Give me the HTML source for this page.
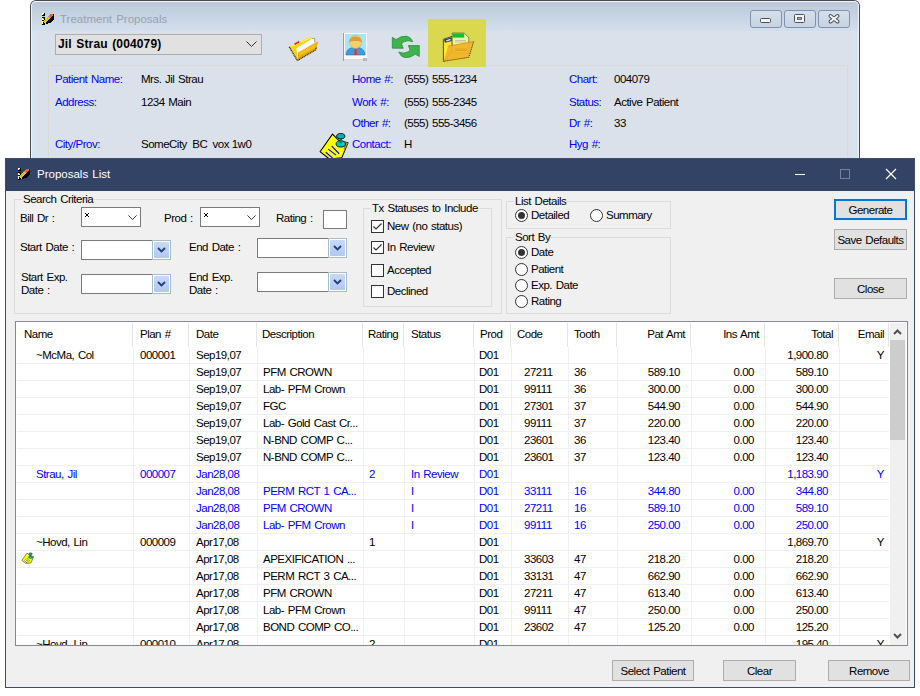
<!DOCTYPE html><html><head><meta charset="utf-8"><style>
*{margin:0;padding:0;box-sizing:border-box}
html,body{width:920px;height:696px;overflow:hidden;background:#fff;font-family:"Liberation Sans",sans-serif;font-size:11.5px;color:#000;letter-spacing:-0.5px;word-spacing:1px}
.a{position:absolute}
.t{position:absolute;line-height:17px;white-space:pre}
</style></head><body>
<div class="a" style="left:30px;top:0;width:830px;height:170px;border:1px solid #4a4a4a;border-bottom:none;border-radius:6px 6px 0 0;background:linear-gradient(#bac8d9,#d3dfec 30px);"></div>
<div class="a" style="left:31px;top:1px;width:828px;height:169px;border:1px solid #eef4ff;border-bottom:none;border-radius:5px 5px 0 0;"></div>
<div class="a" style="left:32px;top:31px;width:6px;height:130px;background:#d6e4f0"></div>
<div class="a" style="left:852px;top:31px;width:6px;height:130px;background:#d6e4f0"></div>
<div class="a" style="left:38px;top:31px;width:814px;height:130px;background:#dbe1eb"></div>
<div class="t" style="left:60px;top:11px;font-size:11.5px;letter-spacing:0;color:#9aa0ad">Treatment Proposals</div>
<div class="a" style="left:750px;top:10px;width:32px;height:18px;border:1px solid #8191b3;border-radius:3px;background:linear-gradient(#d6e0ec,#c6d3e2)"></div>
<div class="a" style="left:784px;top:10px;width:32px;height:18px;border:1px solid #8191b3;border-radius:3px;background:linear-gradient(#d6e0ec,#c6d3e2)"></div>
<div class="a" style="left:818px;top:10px;width:32px;height:18px;border:1px solid #8191b3;border-radius:3px;background:linear-gradient(#d6e0ec,#c6d3e2)"></div>
<div class="a" style="left:55px;top:34px;width:207px;height:21px;border:1px solid #adadad;background:#e1e1e1"></div>
<div class="t" style="left:58px;top:36px;font-size:12px;font-weight:bold;letter-spacing:0.15px">Jil Strau (004079)</div>
<div class="a" style="left:48px;top:65px;width:800px;height:100px;border:1px solid #d9d9d9;border-bottom:none;background:#dbe1eb"></div>
<div class="t" style="left:55px;top:71px;color:#0000ff;">Patient Name:</div>
<div class="t" style="left:141px;top:71px;">Mrs. Jil Strau</div>
<div class="t" style="left:55px;top:94px;color:#0000ff;">Address:</div>
<div class="t" style="left:141px;top:94px;">1234 Main</div>
<div class="t" style="left:55px;top:136px;color:#0000ff;">City/Prov:</div>
<div class="t" style="left:141px;top:136px;"><span style="word-spacing:0">SomeCity  BC  vox 1w0</span></div>
<div class="t" style="left:352px;top:71px;color:#0000ff;">Home #:</div>
<div class="t" style="left:404px;top:71px;">(555) 555-1234</div>
<div class="t" style="left:352px;top:94px;color:#0000ff;">Work #:</div>
<div class="t" style="left:404px;top:94px;">(555) 555-2345</div>
<div class="t" style="left:352px;top:115px;color:#0000ff;">Other #:</div>
<div class="t" style="left:404px;top:115px;">(555) 555-3456</div>
<div class="t" style="left:352px;top:136px;color:#0000ff;">Contact:</div>
<div class="t" style="left:404px;top:136px;">H</div>
<div class="t" style="left:569px;top:71px;color:#0000ff;">Chart:</div>
<div class="t" style="left:614px;top:71px;">004079</div>
<div class="t" style="left:569px;top:94px;color:#0000ff;">Status:</div>
<div class="t" style="left:614px;top:94px;">Active Patient</div>
<div class="t" style="left:569px;top:115px;color:#0000ff;">Dr #:</div>
<div class="t" style="left:614px;top:115px;">33</div>
<div class="t" style="left:569px;top:136px;color:#0000ff;">Hyg #:</div>
<div class="a" style="left:428px;top:19px;width:58px;height:48px;background:#d9d84f"></div>
<svg class="a" style="left:42px;top:13px" width="12" height="12" shape-rendering="crispEdges"><rect x="0" y="0" width="1" height="1" fill="#ffffff"/><rect x="1" y="0" width="1" height="1" fill="#ffffff"/><rect x="2" y="0" width="1" height="1" fill="#000000"/><rect x="0" y="1" width="1" height="1" fill="#ffffff"/><rect x="1" y="1" width="1" height="1" fill="#ff0000"/><rect x="2" y="1" width="1" height="1" fill="#000000"/><rect x="8" y="1" width="1" height="1" fill="#e86010"/><rect x="9" y="1" width="1" height="1" fill="#e86010"/><rect x="10" y="1" width="1" height="1" fill="#e86010"/><rect x="11" y="1" width="1" height="1" fill="#000000"/><rect x="0" y="2" width="1" height="1" fill="#000000"/><rect x="1" y="2" width="1" height="1" fill="#000000"/><rect x="2" y="2" width="1" height="1" fill="#000000"/><rect x="7" y="2" width="1" height="1" fill="#9a9aa8"/><rect x="8" y="2" width="1" height="1" fill="#e86010"/><rect x="9" y="2" width="1" height="1" fill="#e86010"/><rect x="10" y="2" width="1" height="1" fill="#e86010"/><rect x="11" y="2" width="1" height="1" fill="#000000"/><rect x="6" y="3" width="1" height="1" fill="#9a9aa8"/><rect x="7" y="3" width="1" height="1" fill="#9a9aa8"/><rect x="8" y="3" width="1" height="1" fill="#e86010"/><rect x="9" y="3" width="1" height="1" fill="#e86010"/><rect x="10" y="3" width="1" height="1" fill="#000000"/><rect x="11" y="3" width="1" height="1" fill="#000000"/><rect x="0" y="4" width="1" height="1" fill="#000000"/><rect x="1" y="4" width="1" height="1" fill="#000000"/><rect x="2" y="4" width="1" height="1" fill="#000000"/><rect x="5" y="4" width="1" height="1" fill="#f0c800"/><rect x="6" y="4" width="1" height="1" fill="#f0c800"/><rect x="7" y="4" width="1" height="1" fill="#9a9aa8"/><rect x="8" y="4" width="1" height="1" fill="#e86010"/><rect x="9" y="4" width="1" height="1" fill="#000000"/><rect x="10" y="4" width="1" height="1" fill="#000000"/><rect x="11" y="4" width="1" height="1" fill="#000000"/><rect x="0" y="5" width="1" height="1" fill="#ffffff"/><rect x="1" y="5" width="1" height="1" fill="#00e000"/><rect x="2" y="5" width="1" height="1" fill="#000000"/><rect x="4" y="5" width="1" height="1" fill="#f0c800"/><rect x="5" y="5" width="1" height="1" fill="#b8a850"/><rect x="6" y="5" width="1" height="1" fill="#f0c800"/><rect x="7" y="5" width="1" height="1" fill="#f0c800"/><rect x="8" y="5" width="1" height="1" fill="#000000"/><rect x="9" y="5" width="1" height="1" fill="#000000"/><rect x="10" y="5" width="1" height="1" fill="#000000"/><rect x="11" y="5" width="1" height="1" fill="#000000"/><rect x="0" y="6" width="1" height="1" fill="#ffffff"/><rect x="1" y="6" width="1" height="1" fill="#ffffff"/><rect x="2" y="6" width="1" height="1" fill="#000000"/><rect x="3" y="6" width="1" height="1" fill="#f0c800"/><rect x="4" y="6" width="1" height="1" fill="#f0c800"/><rect x="5" y="6" width="1" height="1" fill="#f0c800"/><rect x="6" y="6" width="1" height="1" fill="#b8a850"/><rect x="7" y="6" width="1" height="1" fill="#000000"/><rect x="8" y="6" width="1" height="1" fill="#000000"/><rect x="9" y="6" width="1" height="1" fill="#000000"/><rect x="10" y="6" width="1" height="1" fill="#000000"/><rect x="11" y="6" width="1" height="1" fill="#000000"/><rect x="0" y="7" width="1" height="1" fill="#000000"/><rect x="1" y="7" width="1" height="1" fill="#000000"/><rect x="2" y="7" width="1" height="1" fill="#f0c800"/><rect x="3" y="7" width="1" height="1" fill="#b8a850"/><rect x="4" y="7" width="1" height="1" fill="#f0c800"/><rect x="5" y="7" width="1" height="1" fill="#f0c800"/><rect x="6" y="7" width="1" height="1" fill="#000000"/><rect x="7" y="7" width="1" height="1" fill="#000000"/><rect x="8" y="7" width="1" height="1" fill="#000000"/><rect x="9" y="7" width="1" height="1" fill="#000000"/><rect x="10" y="7" width="1" height="1" fill="#000000"/><rect x="0" y="8" width="1" height="1" fill="#ffffff"/><rect x="1" y="8" width="1" height="1" fill="#f0c800"/><rect x="2" y="8" width="1" height="1" fill="#f0c800"/><rect x="3" y="8" width="1" height="1" fill="#f0c800"/><rect x="4" y="8" width="1" height="1" fill="#b8a850"/><rect x="5" y="8" width="1" height="1" fill="#000000"/><rect x="6" y="8" width="1" height="1" fill="#000000"/><rect x="7" y="8" width="1" height="1" fill="#000000"/><rect x="8" y="8" width="1" height="1" fill="#000000"/><rect x="9" y="8" width="1" height="1" fill="#000000"/><rect x="0" y="9" width="1" height="1" fill="#ffffff"/><rect x="1" y="9" width="1" height="1" fill="#000000"/><rect x="2" y="9" width="1" height="1" fill="#f0c800"/><rect x="3" y="9" width="1" height="1" fill="#f0c800"/><rect x="4" y="9" width="1" height="1" fill="#000000"/><rect x="5" y="9" width="1" height="1" fill="#000000"/><rect x="6" y="9" width="1" height="1" fill="#000000"/><rect x="7" y="9" width="1" height="1" fill="#000000"/><rect x="8" y="9" width="1" height="1" fill="#000000"/><rect x="0" y="10" width="1" height="1" fill="#ffffff"/><rect x="1" y="10" width="1" height="1" fill="#000000"/><rect x="2" y="10" width="1" height="1" fill="#000000"/><rect x="3" y="10" width="1" height="1" fill="#f0c800"/><rect x="4" y="10" width="1" height="1" fill="#000000"/><rect x="5" y="10" width="1" height="1" fill="#000000"/><rect x="0" y="11" width="1" height="1" fill="#000000"/><rect x="1" y="11" width="1" height="1" fill="#000000"/><rect x="2" y="11" width="1" height="1" fill="#000000"/></svg>
<svg class="a" style="left:750px;top:10px" width="100" height="18"><rect x="10.5" y="8.5" width="10" height="4" rx="1" fill="#f4f4f4" stroke="#4a4f5a"/><rect x="44.5" y="4.5" width="10" height="8" rx="1" fill="#f4f4f4" stroke="#4a4f5a"/><rect x="47.5" y="7.5" width="4" height="2" fill="#9fb0c8" stroke="#4a4f5a" stroke-width="0.8"/><path d="M80.5 6L87.5 11.5M87.5 6L80.5 11.5" stroke="#4a4f5a" stroke-width="4" stroke-linecap="round"/><path d="M80.5 6L87.5 11.5M87.5 6L80.5 11.5" stroke="#f4f4f4" stroke-width="2" stroke-linecap="round"/></svg>
<svg class="a" style="left:246px;top:41px" width="11" height="7"><path d="M0.5 0.5L5.5 5.5L10.5 0.5" fill="none" stroke="#333" stroke-width="1"/></svg>
<svg class="a" style="left:280px;top:30px" width="50" height="40" viewBox="280 30 50 40"><path d="M289.5,46.6 L309.3,37.3 L312.5,38.6 L296.6,48 L297.3,60.2 Z" fill="#f2d412"/><path d="M290.5,46 L309.3,37.6 L311,38.3 L292,47 Z" fill="#fff050"/><path d="M296.6,48.2 L312,39 L314.7,38.3 L314.7,42.5 L298,52.8 L297.5,58.5 Z" fill="#ffffff"/><path d="M312,38.6 L314.7,38.3 L314.7,42.5" fill="none" stroke="#a09a60" stroke-width="0.9"/><path d="M297.3,60.3 L298,52.8 L318.2,41.2 L315.6,49.8 Z" fill="#f0ac00"/><path d="M299,56 L300,52.5 L316,43.5 L314.5,48 Z" fill="#f5c020"/><path d="M289.2,46.8 L297.3,60.6 L315.6,49.8 L316.5,47" fill="none" stroke="#3a3010" stroke-width="1.3" stroke-dasharray="1.2 0.6"/><path d="M294,43.8 L298.8,41 L299.2,42.6 L295,45 Z" fill="#ff1010"/></svg>
<svg class="a" style="left:343px;top:33px" width="24" height="28"><rect x="0" y="0" width="24" height="28" fill="#f8f8f8"/><rect x="0" y="0" width="1" height="28" fill="#a596ad"/><rect x="2" y="1" width="21" height="21" fill="#a8e4fa"/><rect x="1" y="26" width="23" height="2" fill="#dcdcdc"/><rect x="20" y="25" width="4" height="3" fill="#b8b8b8"/><path d="M3,22 C3.5,16 7,14.5 12.5,14.5 C18,14.5 21.5,16 22,22 Z" fill="#3f9be0" stroke="#2a6fb8" stroke-width="0.6"/><path d="M11.6,15.5 L13.6,15.5 L14,22 L11.2,22 Z" fill="#e23a1e"/><ellipse cx="12.5" cy="8.8" rx="6.2" ry="6.6" fill="#f7d06c" stroke="#d8a640" stroke-width="0.5"/><path d="M6.3,9.5 C5.8,1.5 19.2,1.5 18.7,9.5 C17,7.6 8,7.6 6.3,9.5 Z" fill="#d3a04a"/></svg>
<svg class="a" style="left:388px;top:32px" width="36" height="30" viewBox="388 32 36 30"><path d="M392.3,37.3 L396.2,39.5 Q401.5,35.6 406.8,36.2 Q411,37 412.8,41.8 Q408,39.6 403.5,42 Q401.2,43.5 401.8,44.6 L403.3,48.3 L392.3,48.2 Z" fill="#3db54a" stroke="#1f8a34" stroke-width="0.7"/><path transform="rotate(180 405.8 46.9)" d="M392.3,37.3 L396.2,39.5 Q401.5,35.6 406.8,36.2 Q411,37 412.8,41.8 Q408,39.6 403.5,42 Q401.2,43.5 401.8,44.6 L403.3,48.3 L392.3,48.2 Z" fill="#3db54a" stroke="#1f8a34" stroke-width="0.7"/></svg>
<svg class="a" style="left:438px;top:28px" width="40" height="36" viewBox="438 28 40 36"><path d="M443.4,39.3 L452.2,36.4 L452.2,50 L444.5,61.3 L443.4,61.3 Z" fill="#f8e830" stroke="#3a2c10" stroke-width="0.8"/><path d="M444,39.5 L451.7,37.2 L451.7,41 L445,42.8 Z" fill="#283a88"/><path d="M446,40.2 L450.5,38.8 L450.5,40.3 L446.5,41.5 Z" fill="#e8e8c0"/><path d="M452.2,33 L464.2,33 L468.8,37.6 L468.8,53 L452.2,53 Z" fill="#f4f09c" stroke="#4a4a20" stroke-width="0.6"/><rect x="452.5" y="33.3" width="11.7" height="4.3" fill="#10c030"/><path d="M455,40.5 H466 M455,42 H466" stroke="#b8c8a0" stroke-width="0.9"/><path d="M448.3,46.1 L473.7,41.5 L468.8,57.4 L443.4,61.3 Z" fill="#f0b428" fill-opacity="0.93"/><path d="M455,49 H467 M455,50.5 H467" stroke="#e0a020" stroke-width="0.9"/><path d="M473.7,41.5 L468.8,57.4 L443.4,61.3" fill="none" stroke="#6a2010" stroke-width="0.9" stroke-dasharray="1.2 0.8"/><path d="M448.3,46.1 L473.7,41.5" fill="none" stroke="#c08010" stroke-width="0.6"/></svg>
<svg class="a" style="left:318px;top:132px" width="31" height="28" viewBox="318 132 30 27"><path d="M320,151 L332,134 L338,140 L347,142.5 L341,157 L329,158 Z" fill="#ffff00" stroke="#000" stroke-width="1"/><path d="M325.5,151.5 L332.5,157.5 M328,148.5 L335.5,154.3 M331.3,145.7 L338.5,153" stroke="#0000ff" stroke-width="1.1"/><path d="M343,141 L347,142.5 L343,151 Z" fill="#a09010"/><ellipse cx="340" cy="143.5" rx="4.5" ry="3" fill="#00c8c8" stroke="#000" stroke-width="0.8"/><rect x="339" y="137" width="2.2" height="6" fill="#008888"/><ellipse cx="340" cy="136" rx="4" ry="2.6" fill="#00b0b0" stroke="#000" stroke-width="0.8"/></svg>
<div class="a" style="left:5px;top:158px;width:910px;height:530px;border:1px solid #3c4b6e;background:#f0f0f0"></div>
<div class="a" style="left:6px;top:159px;width:908px;height:32px;background:#334365"></div>
<div class="t" style="left:37px;top:166px;font-size:11.5px;letter-spacing:0;color:#fff">Proposals List</div>
<svg class="a" style="left:18px;top:168px" width="12" height="12" shape-rendering="crispEdges"><rect x="0" y="0" width="1" height="1" fill="#ffffff"/><rect x="1" y="0" width="1" height="1" fill="#ffffff"/><rect x="2" y="0" width="1" height="1" fill="#000000"/><rect x="0" y="1" width="1" height="1" fill="#ffffff"/><rect x="1" y="1" width="1" height="1" fill="#ff0000"/><rect x="2" y="1" width="1" height="1" fill="#000000"/><rect x="8" y="1" width="1" height="1" fill="#e86010"/><rect x="9" y="1" width="1" height="1" fill="#e86010"/><rect x="10" y="1" width="1" height="1" fill="#e86010"/><rect x="11" y="1" width="1" height="1" fill="#000000"/><rect x="0" y="2" width="1" height="1" fill="#000000"/><rect x="1" y="2" width="1" height="1" fill="#000000"/><rect x="2" y="2" width="1" height="1" fill="#000000"/><rect x="7" y="2" width="1" height="1" fill="#9a9aa8"/><rect x="8" y="2" width="1" height="1" fill="#e86010"/><rect x="9" y="2" width="1" height="1" fill="#e86010"/><rect x="10" y="2" width="1" height="1" fill="#e86010"/><rect x="11" y="2" width="1" height="1" fill="#000000"/><rect x="6" y="3" width="1" height="1" fill="#9a9aa8"/><rect x="7" y="3" width="1" height="1" fill="#9a9aa8"/><rect x="8" y="3" width="1" height="1" fill="#e86010"/><rect x="9" y="3" width="1" height="1" fill="#e86010"/><rect x="10" y="3" width="1" height="1" fill="#000000"/><rect x="11" y="3" width="1" height="1" fill="#000000"/><rect x="0" y="4" width="1" height="1" fill="#000000"/><rect x="1" y="4" width="1" height="1" fill="#000000"/><rect x="2" y="4" width="1" height="1" fill="#000000"/><rect x="5" y="4" width="1" height="1" fill="#f0c800"/><rect x="6" y="4" width="1" height="1" fill="#f0c800"/><rect x="7" y="4" width="1" height="1" fill="#9a9aa8"/><rect x="8" y="4" width="1" height="1" fill="#e86010"/><rect x="9" y="4" width="1" height="1" fill="#000000"/><rect x="10" y="4" width="1" height="1" fill="#000000"/><rect x="11" y="4" width="1" height="1" fill="#000000"/><rect x="0" y="5" width="1" height="1" fill="#ffffff"/><rect x="1" y="5" width="1" height="1" fill="#00e000"/><rect x="2" y="5" width="1" height="1" fill="#000000"/><rect x="4" y="5" width="1" height="1" fill="#f0c800"/><rect x="5" y="5" width="1" height="1" fill="#b8a850"/><rect x="6" y="5" width="1" height="1" fill="#f0c800"/><rect x="7" y="5" width="1" height="1" fill="#f0c800"/><rect x="8" y="5" width="1" height="1" fill="#000000"/><rect x="9" y="5" width="1" height="1" fill="#000000"/><rect x="10" y="5" width="1" height="1" fill="#000000"/><rect x="11" y="5" width="1" height="1" fill="#000000"/><rect x="0" y="6" width="1" height="1" fill="#ffffff"/><rect x="1" y="6" width="1" height="1" fill="#ffffff"/><rect x="2" y="6" width="1" height="1" fill="#000000"/><rect x="3" y="6" width="1" height="1" fill="#f0c800"/><rect x="4" y="6" width="1" height="1" fill="#f0c800"/><rect x="5" y="6" width="1" height="1" fill="#f0c800"/><rect x="6" y="6" width="1" height="1" fill="#b8a850"/><rect x="7" y="6" width="1" height="1" fill="#000000"/><rect x="8" y="6" width="1" height="1" fill="#000000"/><rect x="9" y="6" width="1" height="1" fill="#000000"/><rect x="10" y="6" width="1" height="1" fill="#000000"/><rect x="11" y="6" width="1" height="1" fill="#000000"/><rect x="0" y="7" width="1" height="1" fill="#000000"/><rect x="1" y="7" width="1" height="1" fill="#000000"/><rect x="2" y="7" width="1" height="1" fill="#f0c800"/><rect x="3" y="7" width="1" height="1" fill="#b8a850"/><rect x="4" y="7" width="1" height="1" fill="#f0c800"/><rect x="5" y="7" width="1" height="1" fill="#f0c800"/><rect x="6" y="7" width="1" height="1" fill="#000000"/><rect x="7" y="7" width="1" height="1" fill="#000000"/><rect x="8" y="7" width="1" height="1" fill="#000000"/><rect x="9" y="7" width="1" height="1" fill="#000000"/><rect x="10" y="7" width="1" height="1" fill="#000000"/><rect x="0" y="8" width="1" height="1" fill="#ffffff"/><rect x="1" y="8" width="1" height="1" fill="#f0c800"/><rect x="2" y="8" width="1" height="1" fill="#f0c800"/><rect x="3" y="8" width="1" height="1" fill="#f0c800"/><rect x="4" y="8" width="1" height="1" fill="#b8a850"/><rect x="5" y="8" width="1" height="1" fill="#000000"/><rect x="6" y="8" width="1" height="1" fill="#000000"/><rect x="7" y="8" width="1" height="1" fill="#000000"/><rect x="8" y="8" width="1" height="1" fill="#000000"/><rect x="9" y="8" width="1" height="1" fill="#000000"/><rect x="0" y="9" width="1" height="1" fill="#ffffff"/><rect x="1" y="9" width="1" height="1" fill="#000000"/><rect x="2" y="9" width="1" height="1" fill="#f0c800"/><rect x="3" y="9" width="1" height="1" fill="#f0c800"/><rect x="4" y="9" width="1" height="1" fill="#000000"/><rect x="5" y="9" width="1" height="1" fill="#000000"/><rect x="6" y="9" width="1" height="1" fill="#000000"/><rect x="7" y="9" width="1" height="1" fill="#000000"/><rect x="8" y="9" width="1" height="1" fill="#000000"/><rect x="0" y="10" width="1" height="1" fill="#ffffff"/><rect x="1" y="10" width="1" height="1" fill="#000000"/><rect x="2" y="10" width="1" height="1" fill="#000000"/><rect x="3" y="10" width="1" height="1" fill="#f0c800"/><rect x="4" y="10" width="1" height="1" fill="#000000"/><rect x="5" y="10" width="1" height="1" fill="#000000"/><rect x="0" y="11" width="1" height="1" fill="#000000"/><rect x="1" y="11" width="1" height="1" fill="#000000"/><rect x="2" y="11" width="1" height="1" fill="#000000"/></svg>
<div class="a" style="left:795px;top:174px;width:10px;height:1px;background:#fff"></div>
<div class="a" style="left:840px;top:169px;width:10px;height:10px;border:1px solid #77809a"></div>
<svg class="a" style="left:885px;top:168px" width="12" height="12"><path d="M1 1L11 11M11 1L1 11" stroke="#fff" stroke-width="1.2"/></svg>
<div class="a" style="left:14px;top:199px;width:488px;height:115px;border:1px solid #dcdcdc"></div>
<div class="t" style="left:22px;top:191px;background:#f0f0f0;padding:0 1px;line-height:17px;height:15px">Search Criteria</div>
<div class="a" style="left:363px;top:208px;width:129px;height:99px;border:1px solid #dcdcdc"></div>
<div class="t" style="left:371px;top:200px;background:#f0f0f0;padding:0 1px;line-height:17px;height:15px">Tx Statuses to Include</div>
<div class="a" style="left:506px;top:201px;width:165px;height:28px;border:1px solid #dcdcdc"></div>
<div class="t" style="left:514px;top:193px;background:#f0f0f0;padding:0 1px;line-height:17px;height:15px">List Details</div>
<div class="a" style="left:506px;top:237px;width:165px;height:77px;border:1px solid #dcdcdc"></div>
<div class="t" style="left:514px;top:229px;background:#f0f0f0;padding:0 1px;line-height:17px;height:15px">Sort By</div>
<div class="t" style="left:20px;top:210px;">Bill Dr :</div>
<div class="t" style="left:164px;top:210px;">Prod :</div>
<div class="t" style="left:276px;top:210px;">Rating :</div>
<div class="t" style="left:20px;top:239px;">Start Date :</div>
<div class="t" style="left:189px;top:239px;">End Date :</div>
<div class="t" style="left:21px;top:269px;">Start Exp.</div>
<div class="t" style="left:21px;top:282px;">Date :</div>
<div class="t" style="left:189px;top:269px;">End Exp.</div>
<div class="t" style="left:189px;top:282px;">Date :</div>
<div class="a" style="left:81px;top:207px;width:60px;height:20px;border:1px solid #7a7a7a;background:#fff"></div>
<svg class="a" style="left:85px;top:213px" width="4" height="4" shape-rendering="crispEdges"><rect x="0" y="0" width="1" height="1"/><rect x="3" y="0" width="1" height="1"/><rect x="1" y="1" width="2" height="2"/><rect x="0" y="3" width="1" height="1"/><rect x="3" y="3" width="1" height="1"/></svg>
<svg class="a" style="left:128px;top:215px" width="9" height="6"><path d="M0.5 0.5L4.5 4.5L8.5 0.5" fill="none" stroke="#333" stroke-width="1"/></svg>
<div class="a" style="left:200px;top:207px;width:60px;height:20px;border:1px solid #7a7a7a;background:#fff"></div>
<svg class="a" style="left:204px;top:213px" width="4" height="4" shape-rendering="crispEdges"><rect x="0" y="0" width="1" height="1"/><rect x="3" y="0" width="1" height="1"/><rect x="1" y="1" width="2" height="2"/><rect x="0" y="3" width="1" height="1"/><rect x="3" y="3" width="1" height="1"/></svg>
<svg class="a" style="left:247px;top:215px" width="9" height="6"><path d="M0.5 0.5L4.5 4.5L8.5 0.5" fill="none" stroke="#333" stroke-width="1"/></svg>
<div class="a" style="left:323px;top:210px;width:24px;height:19px;border:1px solid #7a7a7a;background:#fff"></div>
<div class="a" style="left:81px;top:240px;width:72px;height:20px;border:1px solid #7a7a7a;background:#fff"></div>
<div class="a" style="left:152px;top:240px;width:19px;height:20px;border:1px solid #a6bbd8;background:#fff"></div>
<div class="a" style="left:154px;top:242px;width:15px;height:16px;background:linear-gradient(#c9d9f5,#b3c8ee);border-radius:1px"></div>
<svg class="a" style="left:157px;top:247px" width="9" height="6"><path d="M1 1L4.5 4.5L8 1" fill="none" stroke="#1d3f7a" stroke-width="1.8"/></svg>
<div class="a" style="left:257px;top:238px;width:72px;height:20px;border:1px solid #7a7a7a;background:#fff"></div>
<div class="a" style="left:328px;top:238px;width:19px;height:20px;border:1px solid #a6bbd8;background:#fff"></div>
<div class="a" style="left:330px;top:240px;width:15px;height:16px;background:linear-gradient(#c9d9f5,#b3c8ee);border-radius:1px"></div>
<svg class="a" style="left:333px;top:245px" width="9" height="6"><path d="M1 1L4.5 4.5L8 1" fill="none" stroke="#1d3f7a" stroke-width="1.8"/></svg>
<div class="a" style="left:81px;top:274px;width:72px;height:20px;border:1px solid #7a7a7a;background:#fff"></div>
<div class="a" style="left:152px;top:274px;width:19px;height:20px;border:1px solid #a6bbd8;background:#fff"></div>
<div class="a" style="left:154px;top:276px;width:15px;height:16px;background:linear-gradient(#c9d9f5,#b3c8ee);border-radius:1px"></div>
<svg class="a" style="left:157px;top:281px" width="9" height="6"><path d="M1 1L4.5 4.5L8 1" fill="none" stroke="#1d3f7a" stroke-width="1.8"/></svg>
<div class="a" style="left:257px;top:272px;width:72px;height:20px;border:1px solid #7a7a7a;background:#fff"></div>
<div class="a" style="left:328px;top:272px;width:19px;height:20px;border:1px solid #a6bbd8;background:#fff"></div>
<div class="a" style="left:330px;top:274px;width:15px;height:16px;background:linear-gradient(#c9d9f5,#b3c8ee);border-radius:1px"></div>
<svg class="a" style="left:333px;top:279px" width="9" height="6"><path d="M1 1L4.5 4.5L8 1" fill="none" stroke="#1d3f7a" stroke-width="1.8"/></svg>
<div class="a" style="left:371px;top:220px;width:13px;height:13px;border:1px solid #333;background:#fff"></div>
<svg class="a" style="left:371px;top:220px" width="13" height="13"><path d="M2.5 6.5L5 9L10.5 3.5" fill="none" stroke="#333" stroke-width="1.2"/></svg>
<div class="t" style="left:387px;top:218px;">New (no status)</div>
<div class="a" style="left:371px;top:241px;width:13px;height:13px;border:1px solid #333;background:#fff"></div>
<svg class="a" style="left:371px;top:241px" width="13" height="13"><path d="M2.5 6.5L5 9L10.5 3.5" fill="none" stroke="#333" stroke-width="1.2"/></svg>
<div class="t" style="left:387px;top:239px;">In Review</div>
<div class="a" style="left:371px;top:264px;width:13px;height:13px;border:1px solid #333;background:#fff"></div>
<div class="t" style="left:387px;top:262px;">Accepted</div>
<div class="a" style="left:371px;top:285px;width:13px;height:13px;border:1px solid #333;background:#fff"></div>
<div class="t" style="left:387px;top:283px;">Declined</div>
<div class="a" style="left:515px;top:209px;width:13px;height:13px;border:1px solid #333;border-radius:50%;background:#fff"></div>
<div class="a" style="left:518px;top:212px;width:7px;height:7px;border-radius:50%;background:#333"></div>
<div class="t" style="left:531px;top:207px;">Detailed</div>
<div class="a" style="left:590px;top:209px;width:13px;height:13px;border:1px solid #333;border-radius:50%;background:#fff"></div>
<div class="t" style="left:606px;top:207px;">Summary</div>
<div class="a" style="left:515px;top:246px;width:13px;height:13px;border:1px solid #333;border-radius:50%;background:#fff"></div>
<div class="a" style="left:518px;top:249px;width:7px;height:7px;border-radius:50%;background:#333"></div>
<div class="t" style="left:531px;top:244px;">Date</div>
<div class="a" style="left:515px;top:263px;width:13px;height:13px;border:1px solid #333;border-radius:50%;background:#fff"></div>
<div class="t" style="left:531px;top:261px;">Patient</div>
<div class="a" style="left:515px;top:279px;width:13px;height:13px;border:1px solid #333;border-radius:50%;background:#fff"></div>
<div class="t" style="left:531px;top:277px;">Exp. Date</div>
<div class="a" style="left:515px;top:295px;width:13px;height:13px;border:1px solid #333;border-radius:50%;background:#fff"></div>
<div class="t" style="left:531px;top:293px;">Rating</div>
<div class="a" style="left:834px;top:199px;width:73px;height:21px;border:2px solid #0078d7;background:#e1e1e1"></div>
<div class="t" style="left:834px;top:202px;width:73px;text-align:center">Generate</div>
<div class="a" style="left:834px;top:229px;width:73px;height:21px;border:1px solid #adadad;background:#e1e1e1"></div>
<div class="t" style="left:834px;top:232px;width:73px;text-align:center">Save Defaults</div>
<div class="a" style="left:834px;top:278px;width:73px;height:21px;border:1px solid #adadad;background:#e1e1e1"></div>
<div class="t" style="left:834px;top:281px;width:73px;text-align:center">Close</div>
<div class="a" style="left:612px;top:660px;width:82px;height:21px;border:1px solid #adadad;background:#e1e1e1"></div>
<div class="t" style="left:612px;top:663px;width:82px;text-align:center">Select Patient</div>
<div class="a" style="left:723px;top:660px;width:73px;height:21px;border:1px solid #adadad;background:#e1e1e1"></div>
<div class="t" style="left:723px;top:663px;width:73px;text-align:center">Clear</div>
<div class="a" style="left:828px;top:660px;width:82px;height:21px;border:1px solid #adadad;background:#e1e1e1"></div>
<div class="t" style="left:828px;top:663px;width:82px;text-align:center">Remove</div>
<div class="a" style="left:15px;top:321px;width:893px;height:325px;border:1px solid #828790;background:#fff;overflow:hidden">
<div class="a" style="left:116px;top:1px;width:1px;height:24px;background:#e5e5e5"></div>
<div class="a" style="left:172px;top:1px;width:1px;height:24px;background:#e5e5e5"></div>
<div class="a" style="left:240px;top:1px;width:1px;height:24px;background:#e5e5e5"></div>
<div class="a" style="left:346px;top:1px;width:1px;height:24px;background:#e5e5e5"></div>
<div class="a" style="left:387px;top:1px;width:1px;height:24px;background:#e5e5e5"></div>
<div class="a" style="left:457px;top:1px;width:1px;height:24px;background:#e5e5e5"></div>
<div class="a" style="left:494px;top:1px;width:1px;height:24px;background:#e5e5e5"></div>
<div class="a" style="left:551px;top:1px;width:1px;height:24px;background:#e5e5e5"></div>
<div class="a" style="left:600px;top:1px;width:1px;height:24px;background:#e5e5e5"></div>
<div class="a" style="left:674px;top:1px;width:1px;height:24px;background:#e5e5e5"></div>
<div class="a" style="left:748px;top:1px;width:1px;height:24px;background:#e5e5e5"></div>
<div class="a" style="left:822px;top:1px;width:1px;height:24px;background:#e5e5e5"></div>
<div class="a" style="left:872px;top:1px;width:1px;height:24px;background:#e5e5e5"></div>
<div class="a" style="left:117px;top:25px;width:1px;height:300px;background:#f0f0f0"></div>
<div class="a" style="left:173px;top:25px;width:1px;height:300px;background:#f0f0f0"></div>
<div class="a" style="left:241px;top:25px;width:1px;height:300px;background:#f0f0f0"></div>
<div class="a" style="left:347px;top:25px;width:1px;height:300px;background:#f0f0f0"></div>
<div class="a" style="left:388px;top:25px;width:1px;height:300px;background:#f0f0f0"></div>
<div class="a" style="left:458px;top:25px;width:1px;height:300px;background:#f0f0f0"></div>
<div class="a" style="left:495px;top:25px;width:1px;height:300px;background:#f0f0f0"></div>
<div class="a" style="left:552px;top:25px;width:1px;height:300px;background:#f0f0f0"></div>
<div class="a" style="left:601px;top:25px;width:1px;height:300px;background:#f0f0f0"></div>
<div class="a" style="left:675px;top:25px;width:1px;height:300px;background:#f0f0f0"></div>
<div class="a" style="left:749px;top:25px;width:1px;height:300px;background:#f0f0f0"></div>
<div class="a" style="left:823px;top:25px;width:1px;height:300px;background:#f0f0f0"></div>
<div class="a" style="left:1px;top:41px;width:872px;height:1px;background:#f0f0f0"></div>
<div class="a" style="left:1px;top:58px;width:872px;height:1px;background:#f0f0f0"></div>
<div class="a" style="left:1px;top:75px;width:872px;height:1px;background:#f0f0f0"></div>
<div class="a" style="left:1px;top:92px;width:872px;height:1px;background:#f0f0f0"></div>
<div class="a" style="left:1px;top:109px;width:872px;height:1px;background:#f0f0f0"></div>
<div class="a" style="left:1px;top:126px;width:872px;height:1px;background:#f0f0f0"></div>
<div class="a" style="left:1px;top:143px;width:872px;height:1px;background:#f0f0f0"></div>
<div class="a" style="left:1px;top:160px;width:872px;height:1px;background:#f0f0f0"></div>
<div class="a" style="left:1px;top:177px;width:872px;height:1px;background:#f0f0f0"></div>
<div class="a" style="left:1px;top:194px;width:872px;height:1px;background:#f0f0f0"></div>
<div class="a" style="left:1px;top:211px;width:872px;height:1px;background:#f0f0f0"></div>
<div class="a" style="left:1px;top:228px;width:872px;height:1px;background:#f0f0f0"></div>
<div class="a" style="left:1px;top:245px;width:872px;height:1px;background:#f0f0f0"></div>
<div class="a" style="left:1px;top:262px;width:872px;height:1px;background:#f0f0f0"></div>
<div class="a" style="left:1px;top:279px;width:872px;height:1px;background:#f0f0f0"></div>
<div class="a" style="left:1px;top:296px;width:872px;height:1px;background:#f0f0f0"></div>
<div class="a" style="left:1px;top:313px;width:872px;height:1px;background:#f0f0f0"></div>
<div class="t" style="left:8px;top:4px;color:#000">Name</div>
<div class="t" style="left:124px;top:4px;color:#000">Plan #</div>
<div class="t" style="left:180px;top:4px;color:#000">Date</div>
<div class="t" style="left:246px;top:4px;color:#000">Description</div>
<div class="t" style="left:352px;top:4px;color:#000">Rating</div>
<div class="t" style="left:395px;top:4px;color:#000">Status</div>
<div class="t" style="left:464px;top:4px;color:#000">Prod</div>
<div class="t" style="left:501px;top:4px;color:#000">Code</div>
<div class="t" style="left:558px;top:4px;color:#000">Tooth</div>
<div class="t" style="left:519px;top:4px;width:150px;text-align:right;color:#000">Pat Amt</div>
<div class="t" style="left:593px;top:4px;width:150px;text-align:right;color:#000">Ins Amt</div>
<div class="t" style="left:667px;top:4px;width:150px;text-align:right;color:#000">Total</div>
<div class="t" style="left:718px;top:4px;width:150px;text-align:right;color:#000">Email</div>
<div class="t" style="left:20px;top:25px;color:#000">~McMa, Col</div>
<div class="t" style="left:124px;top:25px;color:#000">000001</div>
<div class="t" style="left:180px;top:25px;color:#000">Sep19,07</div>
<div class="t" style="left:463px;top:25px;color:#000">D01</div>
<div class="t" style="left:662px;top:25px;width:150px;text-align:right;color:#000">1,900.80</div>
<div class="t" style="left:718px;top:25px;width:150px;text-align:right;color:#000">Y</div>
<div class="t" style="left:180px;top:42px;color:#000">Sep19,07</div>
<div class="t" style="left:247px;top:42px;color:#000">PFM CROWN</div>
<div class="t" style="left:463px;top:42px;color:#000">D01</div>
<div class="t" style="left:508px;top:42px;color:#000">27211</div>
<div class="t" style="left:558px;top:42px;color:#000">36</div>
<div class="t" style="left:514px;top:42px;width:150px;text-align:right;color:#000">589.10</div>
<div class="t" style="left:588px;top:42px;width:150px;text-align:right;color:#000">0.00</div>
<div class="t" style="left:662px;top:42px;width:150px;text-align:right;color:#000">589.10</div>
<div class="t" style="left:180px;top:59px;color:#000">Sep19,07</div>
<div class="t" style="left:247px;top:59px;color:#000">Lab- PFM Crown</div>
<div class="t" style="left:463px;top:59px;color:#000">D01</div>
<div class="t" style="left:508px;top:59px;color:#000">99111</div>
<div class="t" style="left:558px;top:59px;color:#000">36</div>
<div class="t" style="left:514px;top:59px;width:150px;text-align:right;color:#000">300.00</div>
<div class="t" style="left:588px;top:59px;width:150px;text-align:right;color:#000">0.00</div>
<div class="t" style="left:662px;top:59px;width:150px;text-align:right;color:#000">300.00</div>
<div class="t" style="left:180px;top:76px;color:#000">Sep19,07</div>
<div class="t" style="left:247px;top:76px;color:#000">FGC</div>
<div class="t" style="left:463px;top:76px;color:#000">D01</div>
<div class="t" style="left:508px;top:76px;color:#000">27301</div>
<div class="t" style="left:558px;top:76px;color:#000">37</div>
<div class="t" style="left:514px;top:76px;width:150px;text-align:right;color:#000">544.90</div>
<div class="t" style="left:588px;top:76px;width:150px;text-align:right;color:#000">0.00</div>
<div class="t" style="left:662px;top:76px;width:150px;text-align:right;color:#000">544.90</div>
<div class="t" style="left:180px;top:93px;color:#000">Sep19,07</div>
<div class="t" style="left:247px;top:93px;color:#000">Lab- Gold Cast Cr...</div>
<div class="t" style="left:463px;top:93px;color:#000">D01</div>
<div class="t" style="left:508px;top:93px;color:#000">99111</div>
<div class="t" style="left:558px;top:93px;color:#000">37</div>
<div class="t" style="left:514px;top:93px;width:150px;text-align:right;color:#000">220.00</div>
<div class="t" style="left:588px;top:93px;width:150px;text-align:right;color:#000">0.00</div>
<div class="t" style="left:662px;top:93px;width:150px;text-align:right;color:#000">220.00</div>
<div class="t" style="left:180px;top:110px;color:#000">Sep19,07</div>
<div class="t" style="left:247px;top:110px;color:#000">N-BND COMP C...</div>
<div class="t" style="left:463px;top:110px;color:#000">D01</div>
<div class="t" style="left:508px;top:110px;color:#000">23601</div>
<div class="t" style="left:558px;top:110px;color:#000">36</div>
<div class="t" style="left:514px;top:110px;width:150px;text-align:right;color:#000">123.40</div>
<div class="t" style="left:588px;top:110px;width:150px;text-align:right;color:#000">0.00</div>
<div class="t" style="left:662px;top:110px;width:150px;text-align:right;color:#000">123.40</div>
<div class="t" style="left:180px;top:127px;color:#000">Sep19,07</div>
<div class="t" style="left:247px;top:127px;color:#000">N-BND COMP C...</div>
<div class="t" style="left:463px;top:127px;color:#000">D01</div>
<div class="t" style="left:508px;top:127px;color:#000">23601</div>
<div class="t" style="left:558px;top:127px;color:#000">37</div>
<div class="t" style="left:514px;top:127px;width:150px;text-align:right;color:#000">123.40</div>
<div class="t" style="left:588px;top:127px;width:150px;text-align:right;color:#000">0.00</div>
<div class="t" style="left:662px;top:127px;width:150px;text-align:right;color:#000">123.40</div>
<div class="t" style="left:20px;top:144px;color:#0000ff">Strau, Jil</div>
<div class="t" style="left:124px;top:144px;color:#0000ff">000007</div>
<div class="t" style="left:180px;top:144px;color:#0000ff">Jan28,08</div>
<div class="t" style="left:353px;top:144px;color:#0000ff">2</div>
<div class="t" style="left:395px;top:144px;color:#0000ff">In Review</div>
<div class="t" style="left:463px;top:144px;color:#0000ff">D01</div>
<div class="t" style="left:662px;top:144px;width:150px;text-align:right;color:#0000ff">1,183.90</div>
<div class="t" style="left:718px;top:144px;width:150px;text-align:right;color:#0000ff">Y</div>
<div class="t" style="left:180px;top:161px;color:#0000ff">Jan28,08</div>
<div class="t" style="left:247px;top:161px;color:#0000ff">PERM RCT 1 CA...</div>
<div class="t" style="left:395px;top:161px;color:#0000ff">I</div>
<div class="t" style="left:463px;top:161px;color:#0000ff">D01</div>
<div class="t" style="left:508px;top:161px;color:#0000ff">33111</div>
<div class="t" style="left:558px;top:161px;color:#0000ff">16</div>
<div class="t" style="left:514px;top:161px;width:150px;text-align:right;color:#0000ff">344.80</div>
<div class="t" style="left:588px;top:161px;width:150px;text-align:right;color:#0000ff">0.00</div>
<div class="t" style="left:662px;top:161px;width:150px;text-align:right;color:#0000ff">344.80</div>
<div class="t" style="left:180px;top:178px;color:#0000ff">Jan28,08</div>
<div class="t" style="left:247px;top:178px;color:#0000ff">PFM CROWN</div>
<div class="t" style="left:395px;top:178px;color:#0000ff">I</div>
<div class="t" style="left:463px;top:178px;color:#0000ff">D01</div>
<div class="t" style="left:508px;top:178px;color:#0000ff">27211</div>
<div class="t" style="left:558px;top:178px;color:#0000ff">16</div>
<div class="t" style="left:514px;top:178px;width:150px;text-align:right;color:#0000ff">589.10</div>
<div class="t" style="left:588px;top:178px;width:150px;text-align:right;color:#0000ff">0.00</div>
<div class="t" style="left:662px;top:178px;width:150px;text-align:right;color:#0000ff">589.10</div>
<div class="t" style="left:180px;top:195px;color:#0000ff">Jan28,08</div>
<div class="t" style="left:247px;top:195px;color:#0000ff">Lab- PFM Crown</div>
<div class="t" style="left:395px;top:195px;color:#0000ff">I</div>
<div class="t" style="left:463px;top:195px;color:#0000ff">D01</div>
<div class="t" style="left:508px;top:195px;color:#0000ff">99111</div>
<div class="t" style="left:558px;top:195px;color:#0000ff">16</div>
<div class="t" style="left:514px;top:195px;width:150px;text-align:right;color:#0000ff">250.00</div>
<div class="t" style="left:588px;top:195px;width:150px;text-align:right;color:#0000ff">0.00</div>
<div class="t" style="left:662px;top:195px;width:150px;text-align:right;color:#0000ff">250.00</div>
<div class="t" style="left:20px;top:212px;color:#000">~Hovd, Lin</div>
<div class="t" style="left:124px;top:212px;color:#000">000009</div>
<div class="t" style="left:180px;top:212px;color:#000">Apr17,08</div>
<div class="t" style="left:353px;top:212px;color:#000">1</div>
<div class="t" style="left:463px;top:212px;color:#000">D01</div>
<div class="t" style="left:662px;top:212px;width:150px;text-align:right;color:#000">1,869.70</div>
<div class="t" style="left:718px;top:212px;width:150px;text-align:right;color:#000">Y</div>
<div class="t" style="left:180px;top:229px;color:#000">Apr17,08</div>
<div class="t" style="left:247px;top:229px;color:#000">APEXIFICATION ...</div>
<div class="t" style="left:463px;top:229px;color:#000">D01</div>
<div class="t" style="left:508px;top:229px;color:#000">33603</div>
<div class="t" style="left:558px;top:229px;color:#000">47</div>
<div class="t" style="left:514px;top:229px;width:150px;text-align:right;color:#000">218.20</div>
<div class="t" style="left:588px;top:229px;width:150px;text-align:right;color:#000">0.00</div>
<div class="t" style="left:662px;top:229px;width:150px;text-align:right;color:#000">218.20</div>
<div class="t" style="left:180px;top:246px;color:#000">Apr17,08</div>
<div class="t" style="left:247px;top:246px;color:#000">PERM RCT 3 CA...</div>
<div class="t" style="left:463px;top:246px;color:#000">D01</div>
<div class="t" style="left:508px;top:246px;color:#000">33131</div>
<div class="t" style="left:558px;top:246px;color:#000">47</div>
<div class="t" style="left:514px;top:246px;width:150px;text-align:right;color:#000">662.90</div>
<div class="t" style="left:588px;top:246px;width:150px;text-align:right;color:#000">0.00</div>
<div class="t" style="left:662px;top:246px;width:150px;text-align:right;color:#000">662.90</div>
<div class="t" style="left:180px;top:263px;color:#000">Apr17,08</div>
<div class="t" style="left:247px;top:263px;color:#000">PFM CROWN</div>
<div class="t" style="left:463px;top:263px;color:#000">D01</div>
<div class="t" style="left:508px;top:263px;color:#000">27211</div>
<div class="t" style="left:558px;top:263px;color:#000">47</div>
<div class="t" style="left:514px;top:263px;width:150px;text-align:right;color:#000">613.40</div>
<div class="t" style="left:588px;top:263px;width:150px;text-align:right;color:#000">0.00</div>
<div class="t" style="left:662px;top:263px;width:150px;text-align:right;color:#000">613.40</div>
<div class="t" style="left:180px;top:280px;color:#000">Apr17,08</div>
<div class="t" style="left:247px;top:280px;color:#000">Lab- PFM Crown</div>
<div class="t" style="left:463px;top:280px;color:#000">D01</div>
<div class="t" style="left:508px;top:280px;color:#000">99111</div>
<div class="t" style="left:558px;top:280px;color:#000">47</div>
<div class="t" style="left:514px;top:280px;width:150px;text-align:right;color:#000">250.00</div>
<div class="t" style="left:588px;top:280px;width:150px;text-align:right;color:#000">0.00</div>
<div class="t" style="left:662px;top:280px;width:150px;text-align:right;color:#000">250.00</div>
<div class="t" style="left:180px;top:297px;color:#000">Apr17,08</div>
<div class="t" style="left:247px;top:297px;color:#000">BOND COMP CO...</div>
<div class="t" style="left:463px;top:297px;color:#000">D01</div>
<div class="t" style="left:508px;top:297px;color:#000">23602</div>
<div class="t" style="left:558px;top:297px;color:#000">47</div>
<div class="t" style="left:514px;top:297px;width:150px;text-align:right;color:#000">125.20</div>
<div class="t" style="left:588px;top:297px;width:150px;text-align:right;color:#000">0.00</div>
<div class="t" style="left:662px;top:297px;width:150px;text-align:right;color:#000">125.20</div>
<div class="t" style="left:20px;top:314px;color:#000">~Hovd, Lin</div>
<div class="t" style="left:124px;top:314px;color:#000">000010</div>
<div class="t" style="left:180px;top:314px;color:#000">Apr17,08</div>
<div class="t" style="left:353px;top:314px;color:#000">2</div>
<div class="t" style="left:463px;top:314px;color:#000">D01</div>
<div class="t" style="left:662px;top:314px;width:150px;text-align:right;color:#000">195.40</div>
<div class="t" style="left:718px;top:314px;width:150px;text-align:right;color:#000">Y</div>
<svg class="a" style="left:5px;top:230px" width="13" height="12" viewBox="318 132 30 27"><path d="M320,151 L332,134 L338,140 L347,142.5 L341,157 L329,158 Z" fill="#ffff00" stroke="#000" stroke-width="1"/><path d="M325.5,151.5 L332.5,157.5 M328,148.5 L335.5,154.3 M331.3,145.7 L338.5,153" stroke="#0000ff" stroke-width="1.1"/><path d="M343,141 L347,142.5 L343,151 Z" fill="#a09010"/><ellipse cx="340" cy="143.5" rx="4.5" ry="3" fill="#00c8c8" stroke="#000" stroke-width="0.8"/><rect x="339" y="137" width="2.2" height="6" fill="#008888"/><ellipse cx="340" cy="136" rx="4" ry="2.6" fill="#00b0b0" stroke="#000" stroke-width="0.8"/></svg>
<div class="a" style="left:874px;top:1px;width:16px;height:323px;background:#f0f0f0"></div>
<div class="a" style="left:874px;top:18px;width:15px;height:100px;background:#cdcdcd"></div>
<svg class="a" style="left:877px;top:7px" width="9" height="6"><path d="M1 5L4.5 1.5L8 5" fill="none" stroke="#505050" stroke-width="2"/></svg>
<svg class="a" style="left:877px;top:311px" width="9" height="6"><path d="M1 1L4.5 4.5L8 1" fill="none" stroke="#505050" stroke-width="2"/></svg>
</div>
</body></html>
